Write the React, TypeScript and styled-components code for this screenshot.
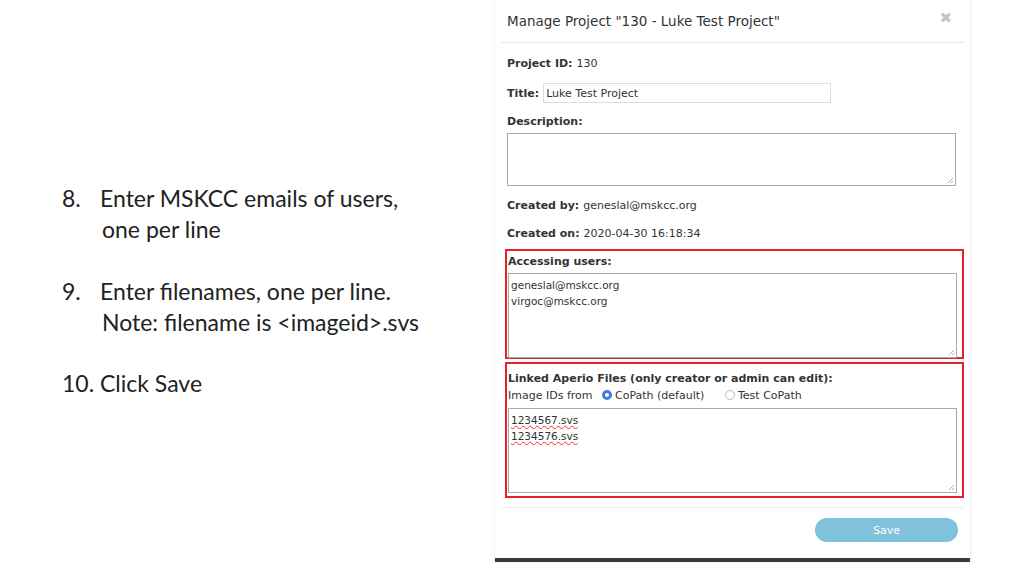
import React from "react";
import styled, { createGlobalStyle } from "styled-components";

const Global = createGlobalStyle`
  html, body { margin: 0; padding: 0; background: #fff; }
  body { width: 1024px; height: 576px; overflow: hidden; }
`;

const Page = styled.div`
  display: flex;
  width: 1024px;
  height: 576px;
`;

const Notes = styled.div`
  width: 433px;
  padding: 183px 0 0 62px;
  font-family: Lato, "Open Sans", sans-serif;
  font-size: 23px;
  color: #222;
  line-height: 31px;
`;

const Item = styled.div<{ mt?: number }>`
  margin-top: ${(p) => p.mt ?? 0}px;
`;
const Num = styled.span`
  display: inline-block;
  width: 38px;
`;
const Indent = styled.div`
  padding-left: 40px;
`;

const Modal = styled.div`
  width: 475px;
  height: 558px;
  background: #fff;
  border-bottom: 4px solid #3a3a3a;
  font-family: "DejaVu Sans", Verdana, sans-serif;
  font-size: 11px;
  color: #333;
  display: flex;
  flex-direction: column;
  box-shadow: 0 0 2px rgba(0,0,0,0.15);
`;

const Header = styled.div`
  display: flex;
  justify-content: space-between;
  align-items: flex-start;
  padding: 13px 12px 0 6px;
  height: 29px;
  border-bottom: 1px solid #e8e8e8;
  margin: 0 6px;
`;
const Title = styled.div`
  font-size: 13.5px;
  color: #333;
`;
const Close = styled.div`
  color: #c4c4c4;
  font-size: 15px;
  font-weight: bold;
  margin-top: -4px;
`;

const Body = styled.div`
  padding: 12px 12px 0 12px;
  display: flex;
  flex-direction: column;
`;
const Row = styled.div<{ mt?: number }>`
  margin-top: ${(p) => p.mt ?? 0}px;
  display: flex;
  align-items: center;
  gap: 4px;
  height: 16px;
`;
const B = styled.b`
  color: #333;
`;
const TextInput = styled.div`
  width: 284px;
  height: 18px;
  border: 1px solid #ddd;
  padding-left: 2px;
  display: flex;
  align-items: center;
`;
const Area = styled.div<{ h: number }>`
  position: relative;
  width: 449px;
  height: ${(p) => p.h}px;
  border: 1px solid #aaa;
  padding: 3px 2px;
  box-sizing: border-box;
  line-height: 16px;
  font-size: 10.5px;
`;
const Grip = styled.svg`
  position: absolute;
  right: 1px;
  bottom: 1px;
`;
const Squiggle = styled.span`
  text-decoration: underline wavy #e33;
  text-decoration-thickness: 1px;
`;
const RedBox = styled.div<{ mt: number; h: number }>`
  margin: ${(p) => p.mt}px -2px 0 -2px;
  height: ${(p) => p.h}px;
  border: 2px solid #e4222c;
  padding: 2px 2px 0 1px;
  box-sizing: border-box;
  width: 459px;
`;
const Radio = styled.span<{ on?: boolean }>`
  display: inline-block;
  width: 10px;
  height: 10px;
  border-radius: 50%;
  box-sizing: border-box;
  border: ${(p) => (p.on ? "3px solid #3a7fe0" : "1px solid #bbb")};
  background: #fff;
  margin-right: 3px;
`;
const RadioRow = styled.div`
  display: flex;
  align-items: center;
  height: 18px;
  margin-bottom: 4px;
`;
const Footer = styled.div`
  margin: 9px 6px 0 6px;
  border-top: 1px solid #eee;
  padding: 10px 6px 0 0;
  display: flex;
  justify-content: flex-end;
`;
const Save = styled.div`
  width: 143px;
  height: 24px;
  border-radius: 12px;
  background: #80c1dc;
  color: #fff;
  display: flex;
  align-items: center;
  justify-content: center;
  font-size: 11px;
`;

const ResizeGrip = () => (
  <Grip width="7" height="7" viewBox="0 0 7 7">
    <path d="M6 1L1 6M6 4L4 6" stroke="#999" strokeWidth="0.8" />
  </Grip>
);

export default function App() {
  return (
    <Page>
      <Global />
      <Notes>
        <Item><Num>8.</Num>Enter MSKCC emails of users,</Item>
        <Indent>one per line</Indent>
        <Item mt={31}><Num>9.</Num>Enter filenames, one per line.</Item>
        <Indent>Note: filename is &lt;imageid&gt;.svs</Indent>
        <Item mt={30}>10. Click Save</Item>
      </Notes>
      <Modal>
        <Header>
          <Title>Manage Project "130 - Luke Test Project"</Title>
          <Close>✖</Close>
        </Header>
        <Body>
          <Row mt={0}><B>Project ID:</B> 130</Row>
          <Row mt={14}><B>Title:</B><TextInput>Luke Test Project</TextInput></Row>
          <Row mt={12}><B>Description:</B></Row>
          <div style={{ marginTop: 4 }}><Area h={53}><ResizeGrip /></Area></div>
          <Row mt={11}><B>Created by:</B> geneslal@mskcc.org</Row>
          <Row mt={12}><B>Created on:</B> 2020-04-30 16:18:34</Row>
          <RedBox mt={8} h={110}>
            <Row><B>Accessing users:</B></Row>
            <Area h={85} style={{ marginTop: 4 }}>
              geneslal@mskcc.org<br />virgoc@mskcc.org
              <ResizeGrip />
            </Area>
          </RedBox>
          <RedBox mt={3} h={136}>
            <Row style={{ marginTop: 4 }}><B>Linked Aperio Files (only creator or admin can edit):</B></Row>
            <RadioRow>
              <span style={{ width: 94 }}>Image IDs from</span>
              <Radio on />
              <span style={{ width: 110 }}>CoPath (default)</span>
              <Radio />
              <span>Test CoPath</span>
            </RadioRow>
            <Area h={85}>
              <Squiggle>1234567.svs</Squiggle><br /><Squiggle>1234576.svs</Squiggle>
              <ResizeGrip />
            </Area>
          </RedBox>
        </Body>
        <Footer><Save>Save</Save></Footer>
      </Modal>
    </Page>
  );
}
